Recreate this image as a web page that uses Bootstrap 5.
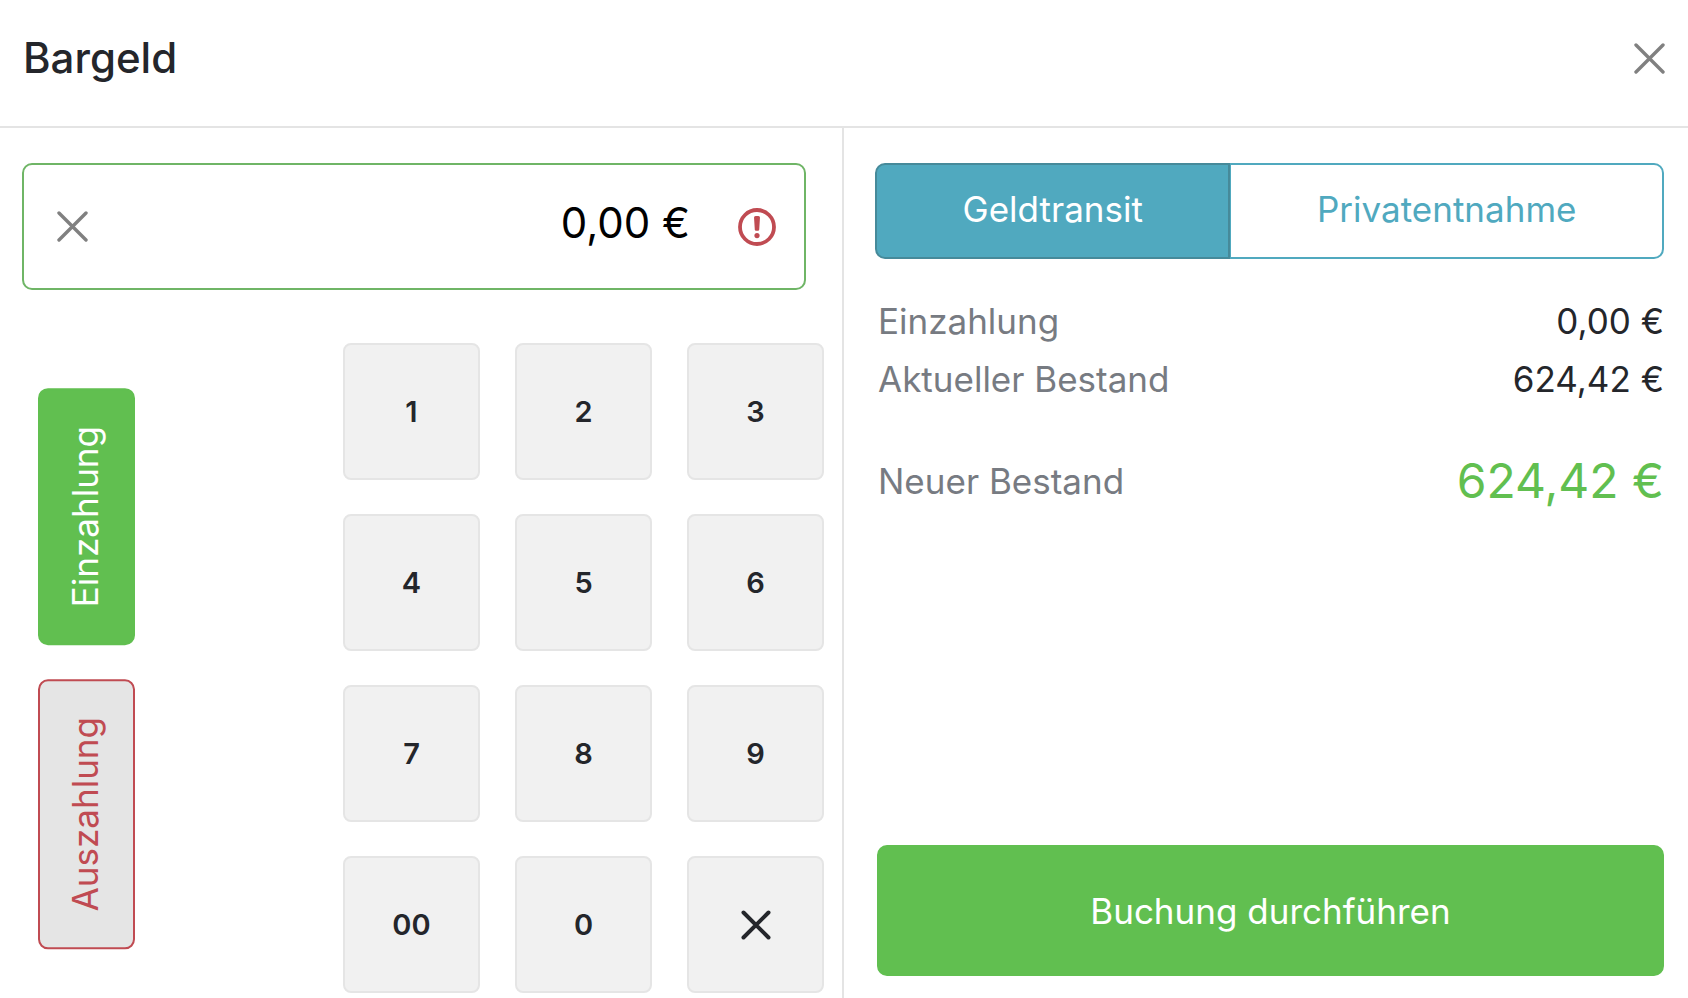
<!DOCTYPE html>
<html lang="de">
<head>
<meta charset="utf-8">
<meta name="viewport" content="width=device-width, initial-scale=1">
<title>Bargeld</title>
<link href="https://cdn.jsdelivr.net/npm/bootstrap@5.3.0/dist/css/bootstrap.min.css" rel="stylesheet">
<style>
  :root {
    --cash-green: #61bf50;
    --cash-teal: #50a9bf;
    --cash-teal-dark: #468a9a;
    --cash-red: #c04b52;
    --cash-line: #e4e4e4;
    --cash-ink: #24262b;
    --cash-muted: #777b82;
  }
  body { font-family: Inter, "Liberation Sans", sans-serif; font-size: 35px; line-height: 58px; color: var(--cash-ink); }
  .btn { --bs-btn-font-size: 35px; --bs-btn-line-height: 48px; --bs-btn-border-width: 2px; --bs-btn-border-radius: 10px; }
  .icon-btn { line-height: 0; }
  .icon-btn svg, .key svg, .warn-icon { display: block; }
  .cash-head { height: 128px; padding: 0 23px 10px; border-bottom: 2px solid var(--cash-line); }
  .cash-title { font-size: 42px; line-height: 56px; font-weight: 500; }
  .entry-pane { border-right: 2px solid var(--cash-line); padding: 35px 18px 5px 22px; }
  .summary-pane { padding: 35px 24px 22px 31px; }
  .amount-box { height: 127px; margin-right: 18px; padding: 0 28px 0 33px; border: 2px solid #6fb566; border-radius: 10px; }
  .amount-box input { font-size: 42px; line-height: 56px; color: #000; outline: 0; min-width: 0; padding: 0 48px 8px 0; }
  .entry-body { padding: 53px 0 0 16px; }
  .modes { gap: 34px; padding-top: 45px; }
  .mode-btn { writing-mode: vertical-rl; transform: rotate(180deg); width: 97px; padding: 36px 0 36px 4px; }
  .mode-in { --bs-btn-color: #fff; --bs-btn-bg: var(--cash-green); --bs-btn-border-color: var(--cash-green); --bs-btn-hover-color: #fff; --bs-btn-hover-bg: #56ad46; }
  .mode-out { --bs-btn-color: var(--cash-red); --bs-btn-bg: #e5e5e5; --bs-btn-border-color: var(--cash-red); --bs-btn-hover-color: var(--cash-red); --bs-btn-hover-bg: #dadada; --bs-btn-hover-border-color: var(--cash-red); }
  .keypad { display: grid; grid-template-columns: repeat(3, 137px); grid-auto-rows: 137px; gap: 34px 35px; }
  .key { --bs-btn-font-size: 29px; --bs-btn-font-weight: 600; --bs-btn-bg: #f1f1f1; --bs-btn-border-color: #e5e5e5; --bs-btn-color: var(--cash-ink); --bs-btn-hover-bg: #e8e8e8; --bs-btn-border-radius: 8px; }
  .kind-btn { --bs-btn-color: var(--cash-teal); --bs-btn-bg: #fff; --bs-btn-border-color: var(--cash-teal); --bs-btn-active-color: #fff; --bs-btn-active-bg: var(--cash-teal); --bs-btn-active-border-color: var(--cash-teal-dark); --bs-btn-hover-color: var(--cash-teal); --bs-btn-hover-border-color: var(--cash-teal); height: 96px; padding: 20px 24px; }
  .totals { padding: 33px 0 0 3px; }
  .totals dt { color: var(--cash-muted); font-weight: 400; }
  .total-new { margin-top: 44px; }
  .total-new dd { font-size: 48px; color: var(--cash-green); }
  .book-btn { --bs-btn-color: #fff; --bs-btn-bg: var(--cash-green); --bs-btn-border-color: var(--cash-green); --bs-btn-hover-color: #fff; --bs-btn-hover-bg: #56ad46; height: 131px; margin-left: 2px; }
</style>
</head>
<body class="bg-white">
<div class="d-flex flex-column min-vh-100">
  <header class="cash-head d-flex align-items-center justify-content-between">
    <h1 class="cash-title m-0">Bargeld</h1>
    <button type="button" class="icon-btn border-0 bg-transparent p-0" aria-label="Schließen">
      <svg width="31" height="31" viewBox="0 0 31 31" fill="none" stroke="#808080" stroke-width="3.4" stroke-linecap="round"><path d="M2 2l27 27M29 2L2 29"/></svg>
    </button>
  </header>
  <main class="row g-0 flex-grow-1">
    <section class="entry-pane col-6 d-flex flex-column">
      <div class="amount-box d-flex align-items-center">
        <button type="button" class="icon-btn border-0 bg-transparent p-0" aria-label="Betrag löschen">
          <svg width="31" height="31" viewBox="0 0 31 31" fill="none" stroke="#808080" stroke-width="3.4" stroke-linecap="round"><path d="M2 2l27 27M29 2L2 29"/></svg>
        </button>
        <input type="text" class="flex-grow-1 border-0 bg-transparent text-end" value="0,00 €" aria-label="Betrag">
        <svg class="warn-icon flex-shrink-0" width="38" height="38" viewBox="0 0 38 38" role="img" aria-label="Betrag fehlt">
          <circle cx="19" cy="19" r="17" fill="none" stroke="#c04b52" stroke-width="3.8"/>
          <path d="M16 9.600q0-1.600 1.600-1.600h2.800q1.600 0 1.600 1.600l-.8 12q-.1 1.200-1.200 1.200h-2q-1.100 0-1.200-1.200z" fill="#c04b52"/>
          <circle cx="19" cy="27.600" r="2.600" fill="#c04b52"/>
        </svg>
      </div>
      <div class="entry-body d-flex justify-content-between">
        <div class="modes d-flex flex-column">
          <button type="button" class="btn mode-btn mode-in" aria-pressed="true">Einzahlung</button>
          <button type="button" class="btn mode-btn mode-out" aria-pressed="false">Auszahlung</button>
        </div>
        <div class="keypad">
          <button type="button" class="btn key">1</button>
          <button type="button" class="btn key">2</button>
          <button type="button" class="btn key">3</button>
          <button type="button" class="btn key">4</button>
          <button type="button" class="btn key">5</button>
          <button type="button" class="btn key">6</button>
          <button type="button" class="btn key">7</button>
          <button type="button" class="btn key">8</button>
          <button type="button" class="btn key">9</button>
          <button type="button" class="btn key">00</button>
          <button type="button" class="btn key">0</button>
          <button type="button" class="btn key" aria-label="Löschen">
            <svg class="mx-auto" width="30" height="30" viewBox="0 0 30 30" fill="none" stroke="#24262b" stroke-width="4" stroke-linecap="round"><path d="M2.500 2.500l25 25M27.500 2.500l-25 25"/></svg>
          </button>
        </div>
      </div>
    </section>
    <section class="summary-pane col-6 d-flex flex-column">
      <div class="btn-group" role="group" aria-label="Buchungsart">
        <input type="radio" class="btn-check" name="kind" id="kind-transit" checked>
        <label class="btn kind-btn" for="kind-transit">Geldtransit</label>
        <input type="radio" class="btn-check" name="kind" id="kind-private">
        <label class="btn kind-btn" for="kind-private">Privatentnahme</label>
      </div>
      <dl class="totals m-0">
        <div class="d-flex justify-content-between"><dt>Einzahlung</dt><dd class="m-0">0,00 €</dd></div>
        <div class="d-flex justify-content-between"><dt>Aktueller Bestand</dt><dd class="m-0">624,42 €</dd></div>
        <div class="total-new d-flex justify-content-between"><dt>Neuer Bestand</dt><dd class="m-0">624,42 €</dd></div>
      </dl>
      <button type="button" class="btn book-btn mt-auto">Buchung durchführen</button>
    </section>
  </main>
</div>
<script src="https://cdn.jsdelivr.net/npm/bootstrap@5.3.0/dist/js/bootstrap.bundle.min.js"></script>
</body>
</html>
